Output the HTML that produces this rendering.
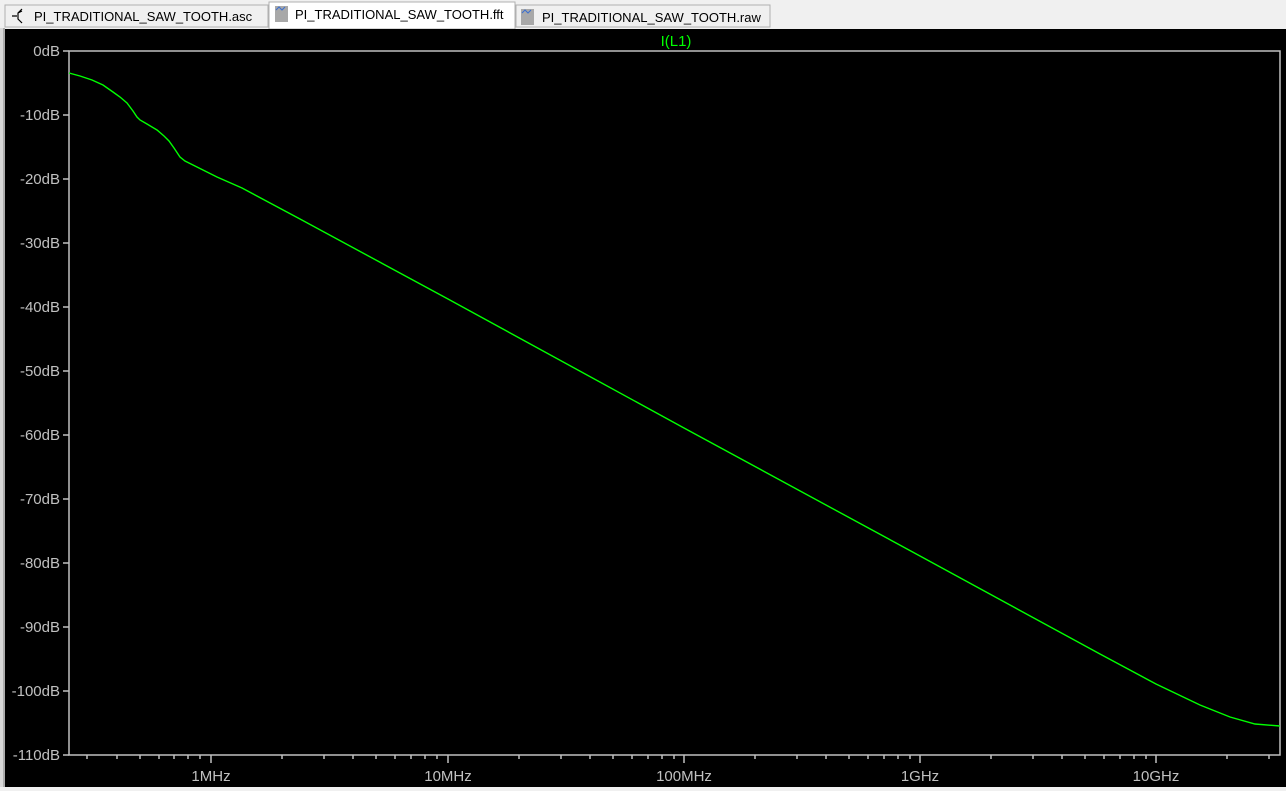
<!DOCTYPE html>
<html><head><meta charset="utf-8"><style>
html,body{margin:0;padding:0;width:1286px;height:791px;overflow:hidden;background:#f0f0f0;font-family:"Liberation Sans",sans-serif}
svg{position:absolute;left:0;top:0}
</style></head><body>
<svg width="1286" height="791" xmlns="http://www.w3.org/2000/svg" font-family="Liberation Sans, sans-serif">
<rect x="0" y="0" width="1286" height="791" fill="#f0f0f0"/>
<rect x="5" y="5" width="263" height="22" fill="#f0f0f0" stroke="#b0b0b0"/>
<rect x="516" y="5" width="254" height="22" fill="#f0f0f0" stroke="#b0b0b0"/>
<rect x="269" y="2" width="246" height="27" fill="#ffffff" stroke="#b0b0b0"/>
<path d="M12 16 H17 M22 9 L18 13 V19 L22 23 M18 13 L22 11" stroke="#000" fill="none" stroke-width="1.2"/>
<text x="34" y="21" font-size="13" fill="#000">PI_TRADITIONAL_SAW_TOOTH.asc</text>
<rect x="275" y="6" width="13" height="16" fill="#a8a8a8"/>
<path d="M276 10 l3 -3 l3 3 l3 -3" stroke="#3a6fd0" fill="none"/>
<text x="295" y="19" font-size="13" fill="#000">PI_TRADITIONAL_SAW_TOOTH.fft</text>
<rect x="521" y="9" width="13" height="16" fill="#a8a8a8"/>
<path d="M522 13 l3 -3 l3 3 l3 -3" stroke="#3a6fd0" fill="none"/>
<text x="542" y="22" font-size="13" fill="#000">PI_TRADITIONAL_SAW_TOOTH.raw</text>
<rect x="0" y="28" width="5" height="760" fill="#d8d8d8"/>
<line x1="4" y1="28" x2="4" y2="788" stroke="#808080"/>
<rect x="5" y="29" width="1281" height="758" fill="#000"/>
<rect x="0" y="787" width="1286" height="4" fill="#f0f0f0"/>
<text x="676" y="46" font-size="15" fill="#00ff00" text-anchor="middle">I(L1)</text>
<g stroke="#c0c0c0" stroke-width="1.5" fill="none">
<path d="M69 51 H1280 V755 H69 Z"/>
<path d="M63 51h6M63 115h6M63 179h6M63 243h6M63 307h6M63 371h6M63 435h6M63 499h6M63 563h6M63 627h6M63 691h6M63 755h6"/>
<path d="M211 755v8M448 755v8M684 755v8M920 755v8M1156 755v8"/>
<path d="M87 755v4M117 755v4M140 755v4M159 755v4M174 755v4M188 755v4M200 755v4
M282 755v4M324 755v4M353 755v4M376 755v4M395 755v4M411 755v4M425 755v4M437 755v4
M519 755v4M561 755v4M590 755v4M613 755v4M632 755v4M648 755v4M662 755v4M674 755v4
M755 755v4M797 755v4M826 755v4M849 755v4M868 755v4M884 755v4M898 755v4M910 755v4
M991 755v4M1033 755v4M1062 755v4M1085 755v4M1104 755v4M1120 755v4M1134 755v4M1146 755v4
M1227 755v4M1269 755v4"/>
</g>
<g fill="#c0c0c0" font-size="15" text-anchor="end">
<text x="60" y="56">0dB</text><text x="60" y="120">-10dB</text><text x="60" y="184">-20dB</text>
<text x="60" y="248">-30dB</text><text x="60" y="312">-40dB</text><text x="60" y="376">-50dB</text>
<text x="60" y="440">-60dB</text><text x="60" y="504">-70dB</text><text x="60" y="568">-80dB</text>
<text x="60" y="632">-90dB</text><text x="60" y="696">-100dB</text><text x="60" y="760">-110dB</text>
</g>
<g fill="#c0c0c0" font-size="15" text-anchor="middle">
<text x="211" y="781">1MHz</text><text x="448" y="781">10MHz</text><text x="684" y="781">100MHz</text>
<text x="920" y="781">1GHz</text><text x="1156" y="781">10GHz</text>
</g>
<path d="M69 73 L80 76 L92 80 L103 85 L113 92 L120 97 L127 103 L133 111 L137 117 L140 120 L147 124 L157 130 L164 136 L169 141 L174 148 L180 157 L185 161 L197 167 L207 172 L217 177 L242 188 L300 219 L448 299 L684 428 L920 556 L1100 654 L1156 684 L1200 705 L1230 717 L1255 724 L1280 726" stroke="#00ff00" stroke-width="1.4" fill="none"/>
</svg>
</body></html>
